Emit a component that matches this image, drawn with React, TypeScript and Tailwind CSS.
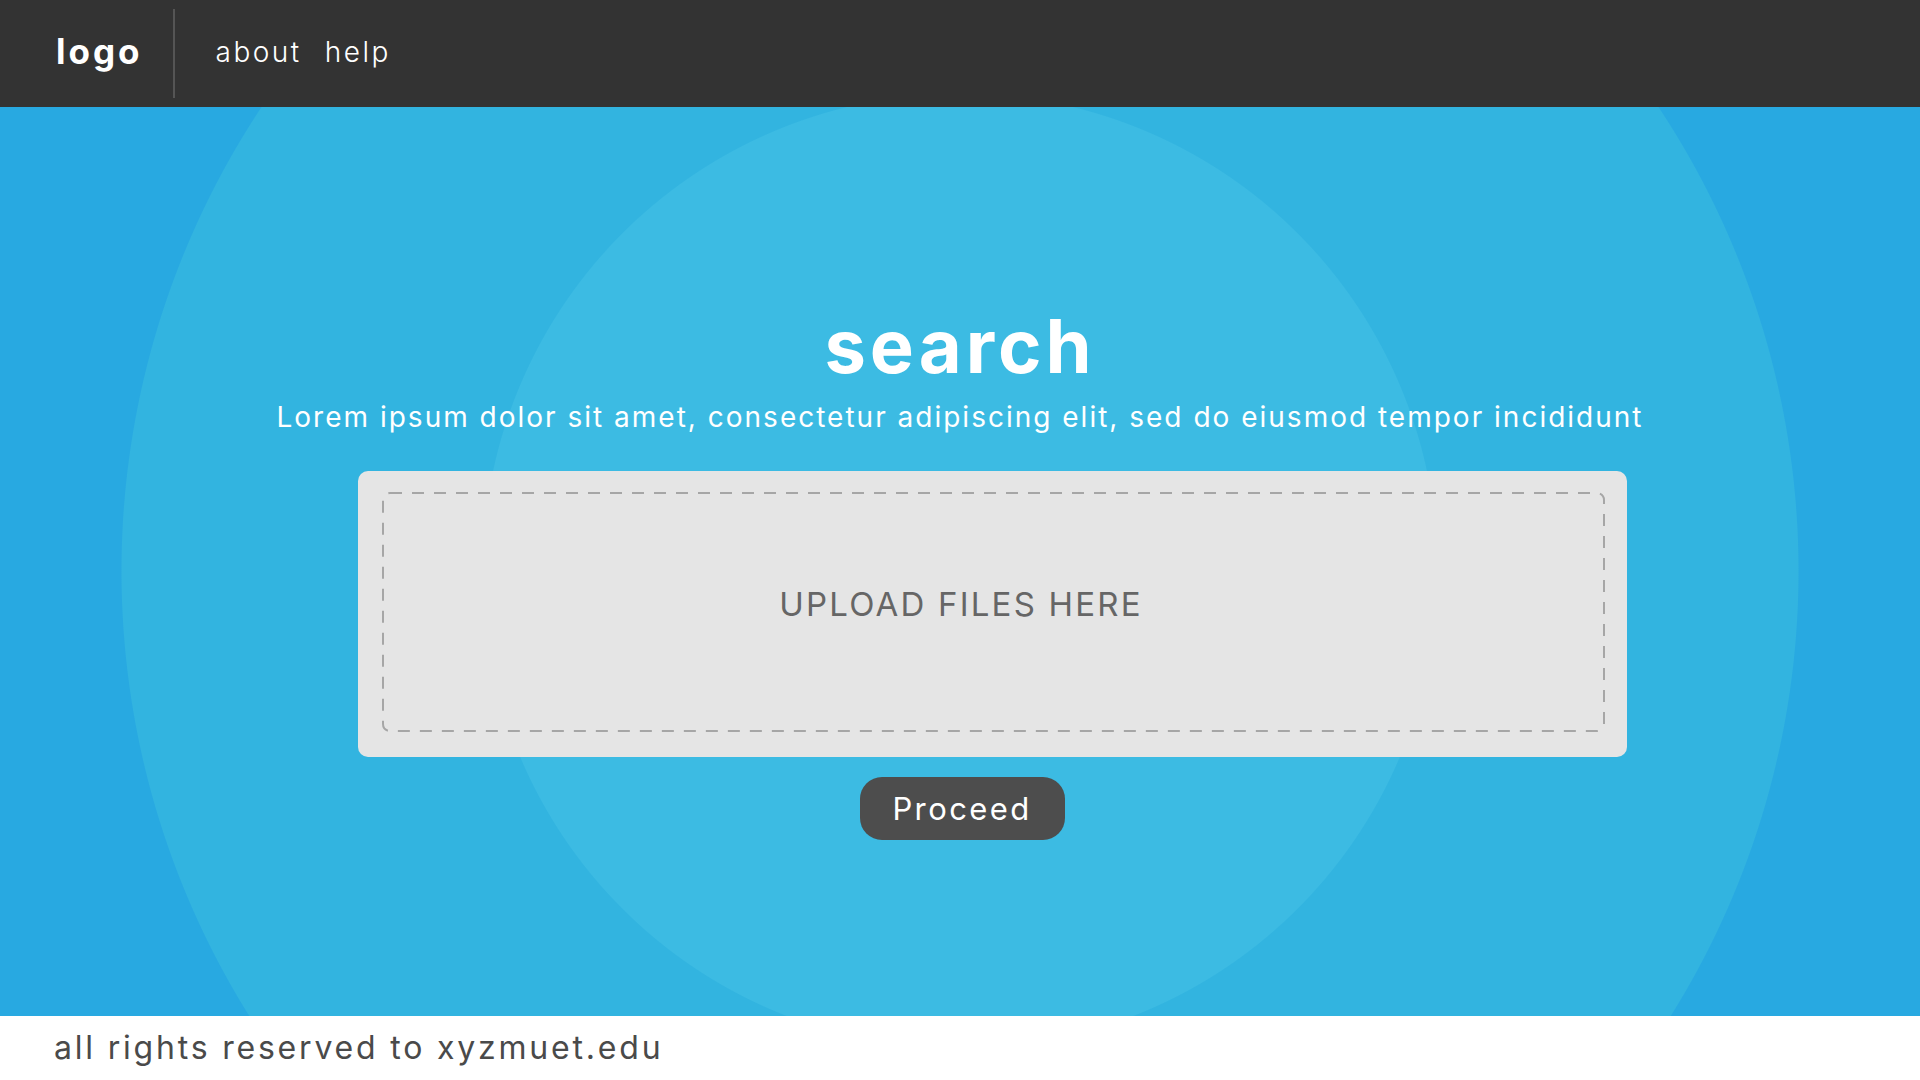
import React from 'react';

const navLinks = ['about', 'help'];

const App = () => {
  return (
    <div className="w-[1920px] h-[1080px] flex flex-col overflow-hidden font-['Inter',sans-serif]">
      {/* Top bar */}
      <header className="h-[107px] shrink-0 bg-[#333333] flex items-center pl-[56px]">
        <span className="text-[35px] font-bold text-white tracking-[3px] leading-none mb-[5px]">logo</span>
        <div className="self-stretch my-[9px] w-[2px] bg-[#555555] ml-[30px]" />
        <nav className="ml-[41px] flex gap-[23px] mb-[3px]">
          {navLinks.map((link) => (
            <a key={link} href="#" className="text-[28px] font-light tracking-[2.5px] text-white leading-none">
              {link}
            </a>
          ))}
        </nav>
      </header>

      {/* Main area with circles */}
      <main className="h-[909px] shrink-0 flex flex-col items-center pt-[202px] bg-[radial-gradient(circle_at_50%_464px,#3cbbe3_477px,#32b4e0_478px,#32b4e0_838px,#28a9e1_839px)]">
        <h1 className="text-[74px] font-bold text-white leading-none tracking-[4px]">search</h1>
        <p className="mt-[20px] text-[28px] text-white leading-none tracking-[2px]">
          Lorem ipsum dolor sit amet, consectetur adipiscing elit, sed do eiusmod tempor incididunt
        </p>

        <div className="mt-[40px] ml-[64px] w-[1269px] h-[286px] rounded-[10px] bg-[#e5e5e5] pl-[24px] pr-[22px] pt-[21px] pb-[25px]">
          <div className="relative w-full h-full flex items-center justify-center pb-[16px]">
            <svg className="absolute inset-0" width="1223" height="240" viewBox="0 0 1223 240" fill="none">
              <rect x="1" y="1" width="1221" height="238" rx="7" stroke="#a6a6a6" strokeWidth="2" strokeDasharray="12 10" />
            </svg>
            <span className="relative mr-[64px] text-[33px] text-[#666666] tracking-[2.2px] leading-none">UPLOAD FILES HERE</span>
          </div>
        </div>

        <button className="mt-[20px] ml-[4px] h-[63px] w-[205px] rounded-[22px] bg-[#4d4d4d] text-white text-[31px] tracking-[2.4px] leading-none">
          Proceed
        </button>
      </main>

      {/* Footer */}
      <footer className="h-[64px] shrink-0 bg-white flex items-center pl-[54px]">
        <span className="text-[32px] text-[#4a4a4a] tracking-[2.8px] leading-none">all rights reserved to xyzmuet.edu</span>
      </footer>
    </div>
  );
};

export default App;
